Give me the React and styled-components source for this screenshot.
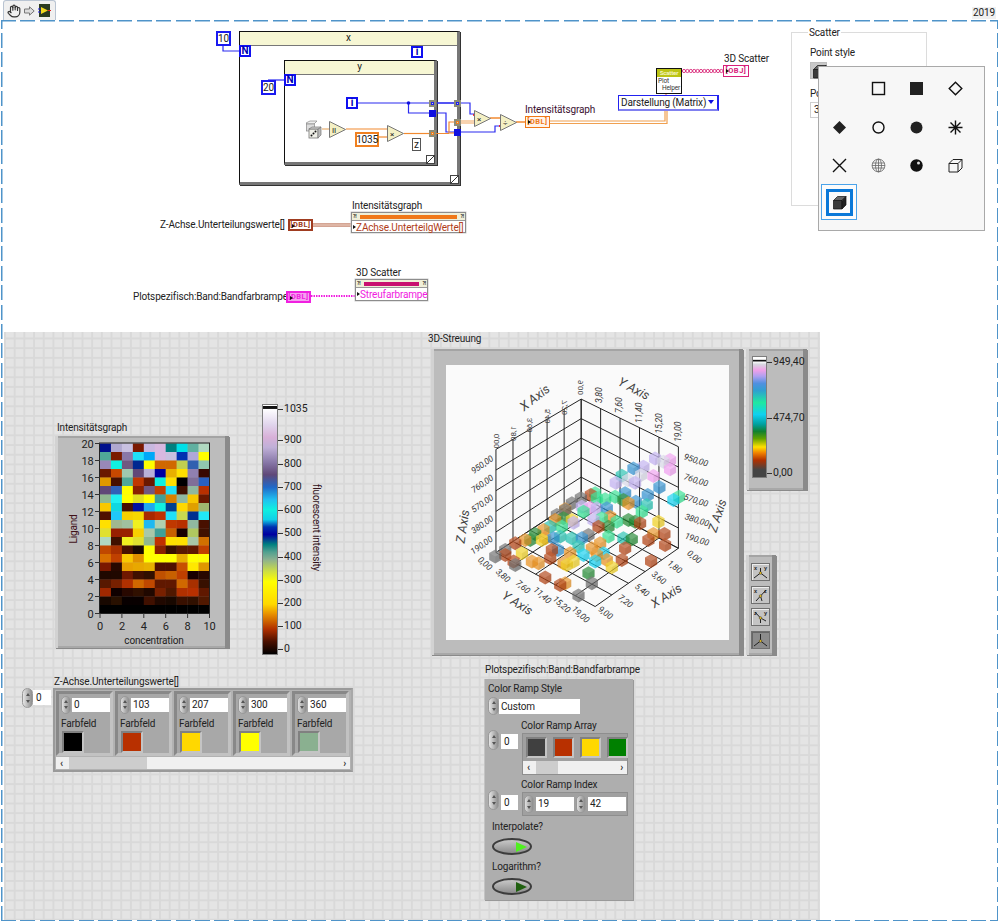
import React from "react";
import styled, { createGlobalStyle, css } from "styled-components";
import { Hand } from "lucide-react";

const GlobalStyle = createGlobalStyle`
  html, body { margin: 0; background: #fff; overflow: hidden; }
  body { font-family: Roboto, "Open Sans", sans-serif; font-size: 10px; letter-spacing: -0.15px; color: #222; }
`;

// diagrams are free canvases, so parts take page coords minus the canvas origin
const place = (ox, oy) => css`
  position: absolute;
  left: ${(p) => p.$x - ox}px;
  top: ${(p) => p.$y - oy}px;
  ${(p) => p.$w && `width: ${p.$w}px;`}
  ${(p) => p.$h && `height: ${p.$h}px;`}
  box-sizing: border-box;
`;
const inDiagram = place(0, 20);
const inPanel = place(4, 332);

const Page = styled.div`
  position: relative;
  width: 999px;
  height: 922px;
  display: flex;
  flex-direction: column;
  overflow: hidden;
  &::after {
    content: "";
    position: absolute;
    left: 1px;
    right: 1px;
    top: 20px;
    bottom: 1px;
    pointer-events: none;
    --d: #4f94c9;
    background:
      repeating-linear-gradient(90deg, var(--d) 0 15px, transparent 15px 19.4px) top / 100% 1.5px no-repeat,
      repeating-linear-gradient(90deg, var(--d) 0 15px, transparent 15px 19.4px) bottom / 100% 1.5px no-repeat,
      repeating-linear-gradient(0deg, var(--d) 0 15px, transparent 15px 19.4px) left / 1.5px 100% no-repeat,
      repeating-linear-gradient(0deg, var(--d) 0 15px, transparent 15px 19.4px) right / 1.5px 100% no-repeat;
  }
`;

const Toolbar = styled.div`
  height: 20px;
  display: flex;
  justify-content: space-between;
  align-items: flex-end;
  padding: 0 3px;
`;
const Tab = styled.div`
  width: 53px;
  height: 20px;
  box-sizing: border-box;
  background: #f0f0f0;
  border: 1px solid #b9c4d2;
  border-bottom: 0;
  border-radius: 3px 3px 0 0;
  display: flex;
  align-items: center;
  gap: 3px;
  padding-left: 3px;
`;
const Version = styled.div`
  background: #f0f0f0;
  width: 24px;
  height: 12px;
  line-height: 12px;
  text-align: center;
  margin-bottom: 1px;
`;

const Diagram = styled.div`
  position: relative;
  height: 312px;
`;
const WireLayer = styled.svg`
  position: absolute;
  left: 0;
  top: 0;
`;
const Label = styled.div`
  ${inDiagram}
  white-space: nowrap;
  line-height: 13px;
  color: ${(p) => p.$color || "#222"};
`;
const Constant = styled.div`
  ${inDiagram}
  border: ${(p) => p.$bw || 2}px solid ${(p) => p.$color};
  background: #fff;
  display: flex;
  align-items: center;
  justify-content: center;
  letter-spacing: -0.2px;
`;
const Loop = styled.div`
  ${inDiagram}
  border: 1px solid #111;
  border-right: 3px solid #777;
  border-bottom: 3px solid #777;
  box-shadow: 1px 1px 0 #333;
`;
const LoopHeader = styled.div`
  height: 13px;
  background: #f7f7d4;
  border-bottom: 1px solid #777;
  text-align: center;
  line-height: 12px;
`;
const Terminal = styled.div`
  ${inDiagram}
  width: 12px;
  height: 12px;
  border: 2px solid #1010f0;
  background: #fff;
  color: #0000b0;
  font-weight: 700;
  font-size: 10px;
  line-height: 8px;
  text-align: center;
`;
const Tunnel = styled.div`
  ${inDiagram}
  width: 7px;
  height: 7px;
  background: ${(p) => (p.$solid ? p.$color : "#d8d8c0")};
  border: ${(p) => (p.$solid ? `0` : `2px solid #8c8c78`)};
  box-shadow: inset 0 0 0 ${(p) => (p.$solid ? 0 : 1)}px ${(p) => p.$color};
`;
const Corner = styled.svg`
  ${inDiagram}
`;
const Indicator = styled.div`
  ${inDiagram}
  height: 12px;
  border: ${(p) => p.$bw || 1}px solid ${(p) => p.$color};
  background: ${(p) => p.$bg || "#fff"};
  color: ${(p) => p.$color};
  font-size: 7.5px;
  font-weight: 700;
  line-height: ${(p) => 12 - 2 * (p.$bw || 1)}px;
  text-align: center;
  letter-spacing: 0.5px;
  &::before {
    content: "";
    position: absolute;
    left: 2px;
    top: 3px;
    border-left: 3px solid #111;
    border-top: 2.5px solid transparent;
    border-bottom: 2.5px solid transparent;
  }
`;
const PropNode = styled.div`
  ${inDiagram}
  border: 1px solid #8d8d8d;
  background: #fff;
  display: flex;
  flex-direction: column;
  box-shadow: 0 0 0 0.5px #ccc;
`;
const PropHead = styled.div`
  height: 7px;
  background: #efefd8;
  border-bottom: 1px solid #999;
  display: flex;
  align-items: center;
  justify-content: space-between;
  gap: 3px;
  padding: 0 1px;
  font-size: 5px;
  font-weight: 700;
  line-height: 7px;
  &::before, &::after { content: "?!"; }
`;
const PropBar = styled.div`
  flex: 1;
  height: 4px;
  background: ${(p) => p.$color};
`;
const PropText = styled.div`
  line-height: 13px;
  padding-left: 4px;
  white-space: nowrap;
  color: ${(p) => p.$color};
  position: relative;
  &::before {
    content: "";
    position: absolute;
    left: 1px;
    top: 4px;
    border-left: 3px solid #111;
    border-top: 2.5px solid transparent;
    border-bottom: 2.5px solid transparent;
  }
`;
const Helper = styled.div`
  ${inDiagram}
  border: 1px solid #111;
  background: #fff;
  font-size: 6.5px;
  line-height: 7px;
  display: flex;
  flex-direction: column;
`;
const HelperHead = styled.div`
  background: #bcc414;
  color: #f4f4c0;
  height: 8px;
  text-align: center;
  line-height: 8px;
  margin-bottom: 1px;
  font-weight: 700;
  font-size: 6px;
`;
const HelperLine = styled.div`
  padding-left: ${(p) => p.$in}px;
  color: #333;
`;
const EnumBox = styled.div`
  ${inDiagram}
  border: 1px solid #2222f0;
  border-right: 2px solid #2222f0;
  border-bottom: 2px solid #8080f0;
  background: #fff;
  display: flex;
  align-items: center;
  justify-content: space-between;
  padding: 0 3px 0 2px;
  white-space: nowrap;
  &::after {
    content: "";
    border: 3px solid transparent;
    border-top: 4px solid #1010e0;
    border-bottom: 0;
    margin-bottom: 2px;
  }
`;

const Fieldset = styled.div`
  ${inDiagram}
  border: 1px solid #dcdcdc;
`;
const FieldLegend = styled.div`
  position: absolute;
  left: 16px;
  top: -7px;
  background: #fff;
  padding: 0 1px;
  line-height: 13px;
`;
const FieldBody = styled.div`
  padding: 13px 0 0 18px;
  display: flex;
  flex-direction: column;
  align-items: flex-start;
`;
const FieldCaption = styled.div`
  line-height: 13px;
  margin-bottom: ${(p) => p.$mb}px;
`;
const StyleButton = styled.div`
  width: 17px;
  height: 17px;
  background: #c8c8c8;
  border: 1px solid #bdbdbd;
  box-sizing: border-box;
  margin-bottom: 8px;
  padding: 1px 0 0 1px;
`;
const NumInput = styled.div`
  width: 26px;
  height: 16px;
  box-sizing: border-box;
  border: 1px solid #cfcfcf;
  line-height: 14px;
  padding-left: 3px;
`;
const Popup = styled.div`
  ${inDiagram}
  background: #f7f7f7;
  border: 1.5px solid #a9a9a9;
  z-index: 3;
  display: grid;
  grid-template-columns: repeat(4, 38.7px);
  grid-auto-rows: 38.7px;
  padding: 2px 0 0 1px;
`;
const PopupCell = styled.div`
  display: flex;
  align-items: center;
  justify-content: center;
  box-sizing: border-box;
  ${(p) => p.$selected && `
    width: 36px;
    height: 36px;
    margin: -1px 0 0 1px;
    background: #fbfbfb;
    border: 1px solid #4aa3ea;
    & > div {
      width: 27px; height: 27px; box-sizing: border-box;
      border: 3px solid #0a78d8;
      display: flex; align-items: center; justify-content: center;
    }
  `}
`;

const Panel = styled.div`
  position: relative;
  margin-left: 4px;
  width: 816px;
  height: 588px;
  background-color: #e4e4e4;
  background-image:
    linear-gradient(90deg, #d9d9d9 1.5px, transparent 1.5px),
    linear-gradient(#d9d9d9 1.5px, transparent 1.5px);
  background-size: 9.7px 9.7px;
  background-position: 0 5.5px;
`;
const Caption = styled.div`
  ${inPanel}
  white-space: nowrap;
  line-height: 13px;
`;
const bevel = css`
  background: #bcbcbc;
  box-shadow:
    inset 3px 0 0 #d2d2d2,
    inset -4px 0 0 #8a8a8a,
    inset 0 2px 0 #a4a4a4,
    inset 0 -2px 0 #a8a8a8,
    1px 1px 0 #8a8a8a;
`;
const GraphFrame = styled.div`
  ${inPanel}
  ${bevel}
`;
const PlotFrame = styled.div`
  ${inPanel}
  ${bevel}
  padding: 16px 14px 15px 15px;
`;
const ColorFrame = styled.div`
  ${inPanel}
  ${bevel}
  padding: 8px 0 0 6px;
`;
const RampBar = styled.div`
  ${inPanel}
  border: 1px solid #7e7e7e;
  background: ${(p) => p.$ramp};
`;
const RampTick = styled.div`
  ${inPanel}
  display: flex;
  align-items: center;
  gap: 1px;
  height: 12px;
  line-height: 12px;
  white-space: nowrap;
  font-size: 10.5px;
  letter-spacing: 0;
  &::before { content: ""; width: 5px; height: 1px; background: #333; }
`;
const VerticalTitle = styled.div`
  ${inPanel}
  writing-mode: vertical-rl;
  white-space: nowrap;
  color: #301018;
  line-height: 13px;
`;
const ButtonStack = styled.div`
  ${inPanel}
  ${bevel}
  display: flex;
  flex-direction: column;
  gap: 4.5px;
  padding: 8px 0 0 5px;
`;
const PlotButton = styled.div`
  width: 19px;
  height: 18px;
  background: ${(p) => (p.$active ? "#8c8c8c" : "#c4c4c4")};
  border: 1px solid #707070;
  box-sizing: border-box;
  box-shadow: inset 1px 1px 0 ${(p) => (p.$active ? "#666" : "#eee")};
`;

const SpinnerBody = styled.div`
  ${inPanel}
  width: 11px;
  height: ${(p) => p.$h || 18}px;
  border-radius: 6px;
  background: linear-gradient(90deg, #e6e6e6, #b0b0b0 60%, #8e8e8e);
  border: 1px solid #9a9a9a;
  display: flex;
  flex-direction: column;
  align-items: center;
  justify-content: space-evenly;
`;
const SpinCaret = styled.div`
  width: 0;
  height: 0;
  border: 2.5px solid transparent;
  ${(p) => (p.$down ? "border-top: 3px solid #555; border-bottom: 0;" : "border-bottom: 3px solid #555; border-top: 0;")}
`;
const Spinner = (props) => (
  <SpinnerBody {...props}>
    <SpinCaret />
    <SpinCaret $down />
  </SpinnerBody>
);
const NumField = styled.div`
  ${inPanel}
  background: #fff;
  height: 15px;
  line-height: 15px;
  padding-left: ${(p) => p.$pad || 3}px;
`;

const ArrayFrame = styled.div`
  ${inPanel}
  background: #b2b2b2;
  border: 2px solid #9a9a9a;
  border-right-color: #a8a8a8;
  padding: 1px;
  display: flex;
  flex-direction: column;
  gap: 1px;
`;
const CellRow = styled.div`
  display: flex;
  gap: 2px;
`;
const ArrayCell = styled.div`
  position: relative;
  width: 57px;
  height: 65px;
  box-sizing: border-box;
  background: #a8a8a8;
  border: 3px solid #888;
  border-right-color: #c2c2c2;
  border-bottom-color: #c2c2c2;
  display: flex;
  flex-direction: column;
`;
const CellTop = styled.div`
  display: flex;
  align-items: center;
  gap: 1px;
  padding: 1px 0 0 2px;
  height: 19px;
`;
const SmallSpin = styled.div`
  width: 10px;
  height: 18px;
  flex: none;
  box-sizing: border-box;
  border-radius: 6px;
  background: linear-gradient(90deg, #e0e0e0, #aaa 60%, #8e8e8e);
  border: 1px solid #999;
  display: flex;
  flex-direction: column;
  align-items: center;
  justify-content: space-evenly;
`;
const CellInput = styled.div`
  flex: 1;
  background: #fff;
  height: 14px;
  line-height: 14px;
  padding-left: 2px;
`;
const CellLabel = styled.div`
  padding-left: 2px;
  line-height: 13px;
  margin-top: 3px;
`;
const SwatchWell = styled.div`
  width: ${(p) => p.$s || 22}px;
  height: ${(p) => p.$s || 22}px;
  box-sizing: border-box;
  margin: ${(p) => (p.$s ? 0 : "1px 0 0 3px")};
  border: 2px solid #808080;
  border-right-color: #c4c4c4;
  border-bottom-color: #c4c4c4;
  background: ${(p) => p.$color};
  flex: none;
`;
const ScrollBar = styled.div`
  height: 13px;
  background: #f0f0f0;
  display: flex;
  align-items: center;
  justify-content: space-between;
  position: relative;
  padding: 0 4px;
  font-size: 10px;
  font-weight: 700;
  color: #333;
`;
const ScrollThumb = styled.div`
  position: absolute;
  left: ${(p) => p.$left}px;
  width: ${(p) => p.$width}px;
  top: 0;
  bottom: 0;
  background: #cdcdcd;
`;

const RampFrame = styled.div`
  ${inPanel}
  background: #aeaeae;
  box-shadow: inset 1px 0 0 #c4c4c4, 1px 1px 0 #999;
`;
const RampLabel = styled.div`
  ${inPanel}
  line-height: 13px;
  white-space: nowrap;
`;
const SwatchRow = styled.div`
  display: flex;
  gap: 6px;
  padding: 3px 3px;
`;
const RampArray = styled.div`
  ${inPanel}
  background: #a0a0a0;
  border: 1px solid #8e8e8e;
`;
const IndexCluster = styled.div`
  ${inPanel}
  background: #a0a0a0;
  border: 1px solid #8e8e8e;
  display: flex;
  align-items: center;
  gap: 2px;
  padding: 0 1px;
`;
const Led = styled.div`
  ${inPanel}
  width: 40px;
  height: 17px;
  border-radius: 50%;
  border: 2px solid #3c3c3c;
  background: linear-gradient(#c8c8c8, #8c8c8c);
  display: flex;
  align-items: center;
  justify-content: flex-end;
  padding-right: 3px;
  &::after {
    content: "";
    border-left: 11px solid ${(p) => p.$color};
    border-top: 5px solid transparent;
    border-bottom: 5px solid transparent;
  }
`;

const heat = [
  ["#00108c", "#b0a8d0", "#c8c0e0", "#7a1800", "#c8b8e0", "#d8b8e0", "#008080", "#00e0e8", "#60b0a0", "#b0d8c0"],
  ["#50a898", "#7a1c00", "#8a78a8", "#20e0f8", "#00a8f8", "#d8b8e0", "#c8c0e0", "#0030b0", "#b0a8d8", "#ffff00"],
  ["#9888b8", "#10f0e0", "#705880", "#002890", "#ffff00", "#d06800", "#d06800", "#c0d050", "#3060b0", "#90c8b0"],
  ["#6a1800", "#c84800", "#a0c8b0", "#604878", "#b8b0d8", "#0000a0", "#e8b000", "#ffe000", "#9080b0", "#380800"],
  ["#e09800", "#481000", "#50a898", "#c03800", "#6a1800", "#10f0e0", "#ffe000", "#000000", "#806f98", "#2860c0"],
  ["#604878", "#3060b8", "#ffff00", "#8a2000", "#705880", "#c04000", "#20e0f8", "#401000", "#90b8a0", "#b83000"],
  ["#90b890", "#20f0f0", "#ffff00", "#e0e020", "#ffff00", "#40a098", "#d88000", "#90b8a0", "#f8c800", "#6a1800"],
  ["#f8c800", "#10d8e0", "#481000", "#0010a0", "#20a8f0", "#10f0e0", "#004090", "#ffd800", "#e0a000", "#a0b870"],
  ["#501000", "#20c8f8", "#f8d000", "#f8d800", "#a82800", "#c03000", "#20e0f8", "#c8d850", "#003090", "#20e8f8"],
  ["#ffe000", "#a0b890", "#a0c0a0", "#f0f020", "#20b8f0", "#b0d0b0", "#c03800", "#b83000", "#90b8a0", "#481000"],
  ["#e0e030", "#982000", "#982000", "#f8d000", "#a8c8a8", "#40a098", "#c86000", "#180000", "#b0c860", "#401000"],
  ["#b0d8c0", "#401000", "#f0f020", "#e0e030", "#90b890", "#c03000", "#ffe000", "#ffe000", "#a8c8a8", "#d07000"],
  ["#c04800", "#a83000", "#481000", "#180800", "#ffff00", "#8a2000", "#381000", "#581800", "#601800", "#c04000"],
  ["#d87000", "#c04000", "#f8c800", "#e09000", "#ffff00", "#ffff00", "#ffff00", "#e8b000", "#ffff00", "#ffff00"],
  ["#7a1800", "#280800", "#e8a000", "#e8a800", "#e8b000", "#501000", "#501000", "#c85000", "#ffe800", "#e09800"],
  ["#200800", "#200800", "#701800", "#401000", "#301000", "#c05000", "#c86000", "#c04000", "#180000", "#280800"],
  ["#581800", "#782000", "#b03000", "#d06800", "#c04800", "#601800", "#601800", "#d06800", "#a83000", "#381000"],
  ["#a02800", "#100000", "#280800", "#301000", "#200800", "#782000", "#501800", "#b03000", "#b83000", "#601800"],
  ["#180800", "#281000", "#080000", "#080000", "#401000", "#200800", "#180800", "#381000", "#301000", "#501800"],
  Array(10).fill("#000"),
];

const intensityRamp = `linear-gradient(0deg,
  #000 0%, #4a1000 5%, #b03000 10%, #e89000 16%, #ffd800 20%, #ffff00 29%, #d0e040 33%, #8ab090 38%,
  #50a090 41%, #008080 44%, #0000a0 48%, #0030b0 51%, #10d0e8 54%, #10f0e0 58%, #20c0f0 62%, #2068c8 67%,
  #604878 72%, #8878a8 77%, #c0b0d8 83%, #d8b0d8 87%, #e0d4ec 92%, #fff 98.5%, #111 98.6%, #111 99.4%, #fff 99.5%)`;
const scatterRamp = `linear-gradient(0deg,
  #444 0%, #444 6%, #b03000 14%, #f08000 20%, #ffe000 25%, #60a000 32%, #108030 38%, #00a0a0 44%, #10d0f0 52%,
  #20e8a0 62%, #2fa0d0 72%, #5090e0 78%, #b0a0f0 84%, #f0a0e8 89%, #d8d8e0 94%, #fff 96%, #111 96.5%, #111 97.5%, #fff 98%)`;

const IntensityPlot = () => (
  <svg width="174" height="213" viewBox="55 436 174 213" fontFamily="Roboto, sans-serif" fontSize="11">
    {heat.map((row, r) =>
      row.map((c, i) => (
        <rect key={`${r}-${i}`} x={100 + i * 10.95} y={443.5 + r * 8.5} width="11.2" height="8.8" fill={c} />
      ))
    )}
    <rect x="99.5" y="443" width="110" height="170.5" fill="none" stroke="#222" />
    {[20, 18, 16, 14, 12, 10, 8, 6, 4, 2, 0].map((v, i) => (
      <g key={v}>
        <line x1="95" x2="100" y1={443.5 + i * 17} y2={443.5 + i * 17} stroke="#333" />
        <text x="93.5" y={447.5 + i * 17} textAnchor="end" fill="#222">{v}</text>
      </g>
    ))}
    {[0, 2, 4, 6, 8, 10].map((v, i) => (
      <g key={v}>
        <line x1={100 + i * 21.9} x2={100 + i * 21.9} y1="613" y2="618" stroke="#333" />
        <text x={100 + i * 21.9} y="630" textAnchor="middle" fill="#222">{v}</text>
      </g>
    ))}
    <text x="154" y="644" textAnchor="middle" fontSize="10" fill="#222">concentration</text>
    <text transform="translate(77 529) rotate(-90)" textAnchor="middle" fontSize="10" fill="#401018">Ligand</text>
  </svg>
);

// cube corners of the 3D axes, in the svg's own units (1 page px = 3 units)
const A = [468, 207], L = [212, 358], R = [760, 350];
const Bb = [468, 500], Lb = [212, 668], Rb = [760, 655], F = [510, 830];
const lerp = (a, b, t) => [a[0] + (b[0] - a[0]) * t, a[1] + (b[1] - a[1]) * t];
const steps = [0, 0.2, 0.4, 0.6, 0.8, 1];
const axisLines = [
  ...steps.map((t) => [lerp(L, A, t), lerp(Lb, Bb, t)]),
  ...steps.map((t) => [lerp(Lb, L, t), lerp(Bb, A, t)]),
  ...steps.map((t) => [lerp(R, A, t), lerp(Rb, Bb, t)]),
  ...steps.map((t) => [lerp(Rb, R, t), lerp(Bb, A, t)]),
  ...steps.map((t) => [lerp(Lb, Bb, t), lerp(F, Rb, t)]),
  ...steps.map((t) => [lerp(Lb, F, t), lerp(Bb, Rb, t)]),
];

const col = {
  br: "#b04010", gr: "#6c6c6c", or: "#e89020", ye: "#f0d020", ge: "#208830", tl: "#20c0b0",
  cy: "#10d0f0", bl: "#3090d0", sg: "#30e090", lv: "#c0b0f0", pk: "#f0a0f0", wh: "#d8d8e8",
};
const cubes = [
  [690, 385, "lv"], [735, 390, "pk"], [715, 395, "wh"], [735, 418, "pk"], [625, 415, "bl"], [655, 410, "lv"],
  [648, 435, "wh"], [685, 438, "pk"], [590, 437, "tl"], [572, 458, "lv"], [608, 450, "wh"], [630, 458, "lv"],
  [703, 472, "bl"], [762, 500, "sg"], [745, 510, "cy"], [668, 495, "bl"], [632, 515, "bl"], [600, 490, "bl"],
  [665, 525, "tl"], [650, 545, "sg"], [570, 500, "sg"], [540, 508, "sg"], [510, 490, "sg"], [497, 495, "br"],
  [515, 505, "sg"], [595, 510, "ge"], [610, 520, "or"], [467, 505, "gr"], [440, 520, "gr"], [420, 540, "gr"],
  [395, 555, "gr"], [420, 538, "or"], [470, 530, "lv"], [495, 533, "pk"], [515, 535, "lv"], [475, 545, "sg"],
  [545, 535, "bl"], [555, 560, "or"], [505, 570, "lv"], [530, 565, "sg"], [575, 575, "sg"], [610, 570, "ge"],
  [630, 575, "ge"], [645, 580, "br"], [700, 575, "ye"], [550, 590, "ge"], [520, 590, "br"], [445, 578, "lv"],
  [415, 565, "ge"], [390, 570, "or"], [440, 570, "ye"], [410, 590, "sg"], [375, 590, "tl"], [355, 600, "or"],
  [330, 612, "ge"], [315, 630, "ge"], [300, 630, "or"], [270, 640, "br"], [240, 660, "gr"], [210, 680, "gr"],
  [240, 675, "br"], [290, 670, "ye"], [350, 630, "ye"], [360, 625, "or"], [385, 625, "bl"], [405, 620, "tl"],
  [440, 625, "tl"], [490, 615, "gr"], [550, 620, "sg"], [595, 625, "tl"], [620, 628, "ge"], [670, 630, "br"],
  [685, 612, "or"], [718, 612, "br"], [720, 645, "br"], [470, 625, "bl"], [460, 650, "tl"], [525, 640, "or"],
  [500, 655, "or"], [535, 670, "cy"], [398, 660, "bl"], [375, 685, "br"], [340, 700, "or"], [320, 695, "or"],
  [265, 695, "br"], [270, 705, "gr"], [415, 700, "or"], [445, 695, "ye"], [425, 705, "ye"], [475, 675, "cy"],
  [510, 695, "cy"], [545, 690, "or"], [560, 712, "ye"], [590, 690, "br"], [600, 655, "br"], [515, 675, "or"],
  [678, 693, "br"], [490, 730, "ge"], [500, 760, "gr"], [360, 743, "br"], [420, 760, "or"], [460, 797, "gr"],
  [405, 765, "br"], [435, 670, "or"], [380, 660, "br"],
].sort((a, b) => a[1] - b[1]);

const Cube = ({ x, y, c }) => {
  const r = 21, h = r * 0.87;
  return (
    <g>
      <polygon points={`${x},${y - r} ${x + h},${y - r / 2} ${x + h},${y + r / 2} ${x},${y + r} ${x - h},${y + r / 2} ${x - h},${y - r / 2}`} fill={col[c]} opacity="0.72" />
      <polygon points={`${x},${y - r} ${x + h},${y - r / 2} ${x},${y} ${x - h},${y - r / 2}`} fill="#fff" opacity="0.1" />
      <polygon points={`${x},${y} ${x + h},${y - r / 2} ${x + h},${y + r / 2} ${x},${y + r}`} fill="#000" opacity="0.05" />
    </g>
  );
};

const tickLabels = [
  ["950,00", 172, 405, -35], ["760,00", 172, 463, -35], ["570,00", 172, 522, -35], ["380,00", 172, 585, -35], ["190,00", 170, 647, -35],
  ["0,00", 178, 702, 42], ["3,80", 232, 738, 42], ["7,60", 292, 772, 42], ["11,40", 350, 797, 42], ["15,20", 408, 825, 42], ["19,00", 465, 855, 42],
  ["9,00", 540, 850, 38], ["7,20", 600, 815, 38], ["5,40", 650, 782, 38], ["3,60", 700, 745, 38], ["1,80", 748, 712, 38], ["0,00", 807, 682, 38],
  ["950,00", 812, 392, 18], ["760,00", 812, 452, 18], ["570,00", 812, 513, 18], ["380,00", 815, 572, 18], ["190,00", 815, 630, 18],
  ["3,80", 525, 195, -90], ["7,60", 585, 225, -90], ["11,40", 643, 248, -90], ["15,20", 703, 280, -90], ["19,00", 762, 305, -90],
];
const mirroredLabels = [["0,00", 215, 333], ["1,80", 265, 310], ["3,60", 315, 285], ["5,40", 368, 258], ["7,20", 418, 232], ["9,00", 468, 172]];
const axisTitles = [
  ["X Axis", 330, 205, -38], ["Y Axis", 625, 178, 28], ["Z Axis", 115, 590, -82], ["Z Axis", 880, 558, -72],
  ["Y Axis", 275, 822, 32], ["X Axis", 725, 800, -32],
];

const ScatterPlot = () => (
  <svg width="283" height="275" viewBox="62 105 850 825" fontFamily="Roboto, sans-serif" style={{ background: "#fafafa", display: "block" }}>
    {axisLines.map(([a, b], i) => (
      <line key={i} x1={a[0]} y1={a[1]} x2={b[0]} y2={b[1]} stroke="#222" strokeWidth="3" />
    ))}
    {cubes.map(([x, y, c], i) => <Cube key={i} x={x} y={y} c={c} />)}
    {tickLabels.map(([t, x, y, a], i) => (
      <text key={i} transform={`translate(${x} ${y}) rotate(${a})`} textAnchor="middle" dominantBaseline="middle" fontSize="26" fontStyle="italic" fill="#333">{t}</text>
    ))}
    {mirroredLabels.map(([t, x, y], i) => (
      <text key={i} transform={`translate(${x} ${y}) rotate(-90) scale(-1 1)`} textAnchor="middle" dominantBaseline="middle" fontSize="24" fill="#444">{t}</text>
    ))}
    {axisTitles.map(([t, x, y, a], i) => (
      <text key={i} transform={`translate(${x} ${y}) rotate(${a})`} textAnchor="middle" dominantBaseline="middle" fontSize="38" fontStyle="italic" fill="#444">{t}</text>
    ))}
  </svg>
);

const chain = Array.from({ length: 12 }, (_, i) => 684 + i * 3.4);

const Wires = () => (
  <WireLayer width="999" height="312" viewBox="0 20 999 312" fill="none">
    <g stroke="#2a2af0" strokeWidth="1.2">
      <path d="M223 46V51H239" />
      <path d="M268 80H285" />
      <path d="M358 103H432M408.5 103V113H432" />
      <path d="M437 103H454" strokeWidth="1.6" />
      <path d="M437 113H446V132H454" />
      <path d="M459 132H495V126H500" />
      <path d="M460 103H470V114H474" />
    </g>
    <circle cx="408.5" cy="103" r="1.8" fill="#1010e0" />
    <g stroke="#f28a30" strokeWidth="1.2">
      <path d="M322 129H329" stroke="#e8b070" />
      <path d="M346 129H387" />
      <path d="M379 137H383V137H387" />
      <path d="M404 133.5H429" />
      <path d="M436 133.5H449V122H454" />
      <path d="M460 121H474M460 123H474" stroke="#f2a860" />
      <path d="M460 133H450" />
      <path d="M490 118H500" strokeWidth="1.5" />
      <path d="M516 122H525" strokeWidth="1.5" />
      <path d="M550 121H665V111M550 123.5H667V111" stroke="#f0a050" />
    </g>
    <circle cx="474" cy="115" r="1" fill="#f00" />
    <circle cx="500" cy="126" r="1" fill="#f00" />
    <circle cx="666" cy="93" r="1.5" fill="#e02020" />
    {chain.map((x) => <circle key={x} cx={x} cy="71" r="1.6" stroke="#d82878" strokeWidth="0.9" />)}
    <path d="M313 224H351M313 226H351" stroke="#a84a28" />
    <path d="M313 225H351" stroke="#f0d0c0" strokeWidth="0.8" />
    <path d="M311 296H355" stroke="#f020e0" strokeWidth="2" strokeDasharray="1.5 1" />
  </WireLayer>
);

const Triangle = styled.svg`
  ${inDiagram}
  overflow: visible;
`;
const Prim = ({ x, y, w = 17, h = 17, sym, size = 8 }) => (
  <Triangle $x={x} $y={y} $w={w} $h={h} viewBox={`0 0 ${w} ${h}`}>
    <polygon points={`0.5,0.5 ${w - 0.5},${h / 2} 0.5,${h - 0.5}`} fill="#f4f0c4" stroke="#777" />
    <text x={w * 0.3} y={h / 2 + 3} textAnchor="middle" fontSize={size} fill="#222" fontFamily="Roboto, sans-serif">{sym}</text>
  </Triangle>
);

const LoopCorner = ({ x, y }) => (
  <Corner $x={x} $y={y} $w={9} $h={9} viewBox="0 0 9 9">
    <rect x="0.5" y="0.5" width="8" height="8" fill="#fff" stroke="#444" />
    <path d="M0.5 8.5L8.5 0.5" stroke="#333" />
  </Corner>
);

const Dice = () => (
  <Triangle $x={305} $y={120} $w={17} $h={19} viewBox="0 0 17 19">
    <path d="M1 3l4-2h7l-3 3H2z" fill="#eee" stroke="#888" strokeWidth=".7" />
    <rect x="1.5" y="4" width="8" height="7" fill="#ddd" stroke="#888" strokeWidth=".7" />
    <rect x="4" y="9" width="9" height="9" fill="#f0f0e8" stroke="#777" strokeWidth=".8" />
    <path d="M13 9l3-2v8l-3 3z" fill="#bbb" stroke="#777" strokeWidth=".7" />
    <path d="M4 9l3-2h9l-3 2z" fill="#ccc" stroke="#777" strokeWidth=".7" />
    <circle cx="6.5" cy="15.5" r="1" fill="#111" /><circle cx="10.5" cy="11.5" r="1" fill="#111" /><circle cx="8.5" cy="13.5" r="1" fill="#111" />
  </Triangle>
);

const Marker = ({ kind }) => {
  const stroke = { stroke: "#111", strokeWidth: 1.4, fill: "none" };
  return (
    <svg width="15" height="15" viewBox="0 0 15 15" style={{ display: "block" }}>
      {kind === "square" && <rect x="1.5" y="1.5" width="12" height="12" {...stroke} />}
      {kind === "squareFill" && <rect x="1" y="1" width="13" height="13" fill="#222" />}
      {kind === "diamond" && <path d="M7.5 1.2L13.8 7.5L7.5 13.8L1.2 7.5Z" {...stroke} />}
      {kind === "diamondFill" && <path d="M7.5 1L14 7.5L7.5 14L1 7.5Z" fill="#222" />}
      {kind === "circle" && <circle cx="7.5" cy="7.5" r="5.5" {...stroke} />}
      {kind === "circleFill" && <circle cx="7.5" cy="7.5" r="6" fill="#222" />}
      {kind === "star" && <path d="M7.5 0.5V14.5M0.5 7.5H14.5M2.5 2.5L12.5 12.5M12.5 2.5L2.5 12.5" {...stroke} />}
      {kind === "cross" && <path d="M1 1L14 14M14 1L1 14" {...stroke} />}
      {kind === "globe" && (
        <g fill="none" stroke="#666" strokeWidth=".8">
          <circle cx="7.5" cy="7.5" r="6.4" />
          <ellipse cx="7.5" cy="7.5" rx="3" ry="6.4" />
          <path d="M7.5 1V14M1.6 5H13.4M1.6 10H13.4M1 7.5H14" />
        </g>
      )}
      {kind === "sphere" && (
        <>
          <circle cx="7.5" cy="7.5" r="6.2" fill="#111" />
          <circle cx="9.5" cy="5" r="1.5" fill="#ddd" />
        </>
      )}
      {kind === "cube" && <path d="M1 5.5H10V14H1ZM1 5.5L5 1.5H14L10 5.5M14 1.5V10L10 14" fill="none" stroke="#222" strokeWidth="1" />}
      {kind === "cubeFill" && (
        <>
          <path d="M1.5 5.5H10V14H1.5Z" fill="#3c3c3c" stroke="#111" strokeWidth=".7" />
          <path d="M1.5 5.5L5.5 1.5H14L10 5.5Z" fill="#666" stroke="#111" strokeWidth=".7" />
          <path d="M10 5.5L14 1.5V10L10 14Z" fill="#222" stroke="#111" strokeWidth=".7" />
        </>
      )}
    </svg>
  );
};

const AxisGlyph = ({ a, b, arrow }) => (
  <svg width="17" height="16" viewBox="0 0 17 16" fontFamily="Liberation Sans, sans-serif" fontSize="5.5" fontWeight="700" fill="#222">
    <path d={arrow} fill="none" stroke="#222" />
    <circle cx="8.5" cy="9" r="1.3" fill="#e8c020" stroke="#333" strokeWidth=".5" />
    {a && <text x="2" y="6">{a}</text>}
    {b && <text x="12" y="6">{b}</text>}
  </svg>
);

const markers = ["", "square", "squareFill", "diamond", "diamondFill", "circle", "circleFill", "star", "cross", "globe", "sphere", "cube"];
const zStops = [
  { v: 0, c: "#000" }, { v: 103, c: "#b83000" }, { v: 207, c: "#ffd800" }, { v: 300, c: "#ffff00" }, { v: 360, c: "#8ab090" },
];

const App = () => (
  <Page>
    <GlobalStyle />
    <Toolbar>
      <Tab>
        <Hand size={14} color="#333" />
        <svg width="11" height="10" viewBox="0 0 11 10"><path d="M0.5 3H5.5V0.8L10.2 5L5.5 9.2V7H0.5Z" fill="#ddd" stroke="#777" /></svg>
        <svg width="13" height="13" viewBox="0 0 13 13">
          <rect x="1" y="0" width="11" height="13" fill="#2a3a20" />
          <path d="M3 3L10 6.5L3 10Z" fill="#f0d820" />
          <path d="M0 5H3M0 8H3" stroke="#2020e0" />
          <path d="M10 6.5H13" stroke="#e02020" />
        </svg>
      </Tab>
      <Version>2019</Version>
    </Toolbar>

    <Diagram>
      <Loop $x={239} $y={31} $w={221} $h={154}><LoopHeader>x</LoopHeader></Loop>
      <Loop $x={284} $y={60} $w={153} $h={105}><LoopHeader>y</LoopHeader></Loop>
      <Wires />
      <Constant $x={216} $y={31} $w={15} $h={15} $color="#1a1af0">10</Constant>
      <Constant $x={261} $y={80} $w={15} $h={15} $color="#1a1af0">20</Constant>
      <Constant $x={355} $y={132} $w={24} $h={15} $color="#f08020">1035</Constant>
      <Terminal $x={239} $y={45}>N</Terminal>
      <Terminal $x={411} $y={46}>i</Terminal>
      <Terminal $x={284} $y={74}>N</Terminal>
      <Terminal $x={346} $y={97}>i</Terminal>
      <LoopCorner x={450} y={175} />
      <LoopCorner x={426} y={155} />
      <Tunnel $x={429} $y={100} $color="#2020f0" />
      <Tunnel $x={429} $y={110} $color="#1010e0" $solid />
      <Tunnel $x={429} $y={130} $color="#f08020" />
      <Tunnel $x={454} $y={100} $color="#2020f0" />
      <Tunnel $x={454} $y={119} $color="#f08020" />
      <Tunnel $x={454} $y={129} $color="#1010e0" $solid />
      <Dice />
      <Prim x={329} y={121} sym="II" />
      <Prim x={387} y={125} sym="×" />
      <Prim x={474} y={110} sym="×" />
      <Prim x={500} y={114} sym="÷" />
      <Constant $x={412} $y={138} $w={9} $h={13} $color="#555" $bw={1}>z</Constant>
      <Label $x={525} $y={103} $color="#3a1030">Intensitätsgraph</Label>
      <Indicator $x={525} $y={116} $w={25} $color="#f07818" $bg="#fff4ea">[DBL]</Indicator>
      <Helper $x={656} $y={68} $w={26} $h={26}>
        <HelperHead>Scatter</HelperHead>
        <HelperLine $in={1}>Plot</HelperLine>
        <HelperLine $in={5}>Helper</HelperLine>
      </Helper>
      <EnumBox $x={618} $y={95} $w={101} $h={16}>Darstellung (Matrix)</EnumBox>
      <Label $x={724} $y={52}>3D Scatter</Label>
      <Indicator $x={723} $y={65} $w={26} $color="#d8207a">[OBJ]</Indicator>

      <Label $x={160} $y={218}>Z-Achse.Unterteilungswerte[]</Label>
      <Indicator $x={288} $y={219} $w={25} $color="#a03c20" $bw={2}>[DBL]</Indicator>
      <Label $x={352} $y={199}>Intensitätsgraph</Label>
      <PropNode $x={351} $y={212} $w={115} $h={21}>
        <PropHead><PropBar $color="#f07818" /></PropHead>
        <PropText $color="#b03c18">ZAchse.UnterteilgWerte[]</PropText>
      </PropNode>

      <Label $x={133} $y={290}>Plotspezifisch:Band:Bandfarbrampe</Label>
      <Indicator $x={286} $y={291} $w={25} $color="#f020e0" $bg="#f4a0f0" $bw={2}>[DBL]</Indicator>
      <Label $x={356} $y={266}>3D Scatter</Label>
      <PropNode $x={355} $y={279} $w={73} $h={22}>
        <PropHead><PropBar $color="#c81070" /></PropHead>
        <PropText $color="#f020e0">Streufarbrampe</PropText>
      </PropNode>

      <Fieldset $x={791} $y={32} $w={136} $h={174}>
        <FieldLegend>Scatter</FieldLegend>
        <FieldBody>
          <FieldCaption $mb={3}>Point style</FieldCaption>
          <StyleButton><Marker kind="cubeFill" /></StyleButton>
          <FieldCaption $mb={2}>Point shape</FieldCaption>
          <NumInput>3</NumInput>
        </FieldBody>
      </Fieldset>
      <Popup $x={818} $y={66} $w={167} $h={165}>
        {markers.map((m, i) => (
          <PopupCell key={i}>{m && <Marker kind={m} />}</PopupCell>
        ))}
        <PopupCell $selected><div><Marker kind="cubeFill" /></div></PopupCell>
      </Popup>
    </Diagram>

    <Panel>
      <Caption $x={57} $y={421}>Intensitätsgraph</Caption>
      <GraphFrame $x={55} $y={436} $w={174} $h={212}><IntensityPlot /></GraphFrame>
      <RampBar $x={262} $y={404} $w={16} $h={251} $ramp={intensityRamp} />
      {[["1035", 403], ["900", 434], ["800", 458], ["700", 481], ["600", 504], ["500", 527], ["400", 551], ["300", 574], ["200", 597], ["100", 620], ["0", 643]].map(([t, y]) => (
        <RampTick key={t} $x={278} $y={y}>{t}</RampTick>
      ))}
      <VerticalTitle $x={310} $y={484}>fluorescent intensity</VerticalTitle>

      <Caption $x={428} $y={332}>3D-Streuung</Caption>
      <PlotFrame $x={431} $y={349} $w={312} $h={306}><ScatterPlot /></PlotFrame>
      <ColorFrame $x={746} $y={349} $w={61} $h={141} />
      <RampBar $x={752} $y={356} $w={15} $h={122} $ramp={scatterRamp} />
      <RampTick $x={767} $y={356}>949,40</RampTick>
      <RampTick $x={767} $y={412}>474,70</RampTick>
      <RampTick $x={767} $y={467}>0,00</RampTick>
      <ButtonStack $x={746} $y={555} $w={30} $h={100}>
        <PlotButton><AxisGlyph a="x" b="y" arrow="M8.5 4V9M8.5 9L2 14M8.5 9L15 14" /></PlotButton>
        <PlotButton><AxisGlyph a="x" b="z" arrow="M8.5 9L4 14M8.5 9L14 3M8.5 9L10 14" /></PlotButton>
        <PlotButton><AxisGlyph a="z" b="y" arrow="M8.5 9L3 3M8.5 9L14 12M8.5 9L8.5 14" /></PlotButton>
        <PlotButton $active><AxisGlyph arrow="M8.5 2V9M8.5 9L2 14M8.5 9L15 14" /></PlotButton>
      </ButtonStack>

      <Caption $x={54} $y={675}>Z-Achse.Unterteilungswerte[]</Caption>
      <Spinner $x={22} $y={688} $h={20} />
      <NumField $x={33} $y={690} $w={18}>0</NumField>
      <ArrayFrame $x={53} $y={688} $w={300} $h={84}>
        <CellRow>
          {zStops.map((s) => (
            <ArrayCell key={s.v}>
              <CellTop>
                <SmallSpin><SpinCaret /><SpinCaret $down /></SmallSpin>
                <CellInput>{s.v}</CellInput>
              </CellTop>
              <CellLabel>Farbfeld</CellLabel>
              <SwatchWell $color={s.c} />
            </ArrayCell>
          ))}
        </CellRow>
        <ScrollBar>
          <span>‹</span><ScrollThumb $left={13} $width={78} /><span>›</span>
        </ScrollBar>
      </ArrayFrame>

      <Caption $x={485} $y={663}>Plotspezifisch:Band:Bandfarbrampe</Caption>
      <RampFrame $x={484} $y={679} $w={149} $h={221} />
      <RampLabel $x={488} $y={682}>Color Ramp Style</RampLabel>
      <Spinner $x={488} $y={697} />
      <NumField $x={499} $y={699} $w={81} $pad={2}>Custom</NumField>
      <RampLabel $x={521} $y={719}>Color Ramp Array</RampLabel>
      <Spinner $x={488} $y={730} $h={20} />
      <NumField $x={501} $y={734} $w={17}>0</NumField>
      <RampArray $x={522} $y={733} $w={106} $h={42}>
        <SwatchRow>
          {["#404040", "#b83000", "#ffd800", "#008000"].map((c) => <SwatchWell key={c} $s={21} $color={c} />)}
        </SwatchRow>
        <ScrollBar>
          <span>‹</span><ScrollThumb $left={13} $width={22} /><span>›</span>
        </ScrollBar>
      </RampArray>
      <RampLabel $x={521} $y={778}>Color Ramp Index</RampLabel>
      <Spinner $x={488} $y={790} $h={20} />
      <NumField $x={501} $y={795} $w={17}>0</NumField>
      <IndexCluster $x={522} $y={792} $w={106} $h={24}>
        <SmallSpin><SpinCaret /><SpinCaret $down /></SmallSpin>
        <CellInput>19</CellInput>
        <SmallSpin><SpinCaret /><SpinCaret $down /></SmallSpin>
        <CellInput>42</CellInput>
      </IndexCluster>
      <RampLabel $x={492} $y={820}>Interpolate?</RampLabel>
      <Led $x={492} $y={838} $color="#50f020" />
      <RampLabel $x={492} $y={860}>Logarithm?</RampLabel>
      <Led $x={492} $y={878} $color="#206010" />
    </Panel>
  </Page>
);

export default App;
